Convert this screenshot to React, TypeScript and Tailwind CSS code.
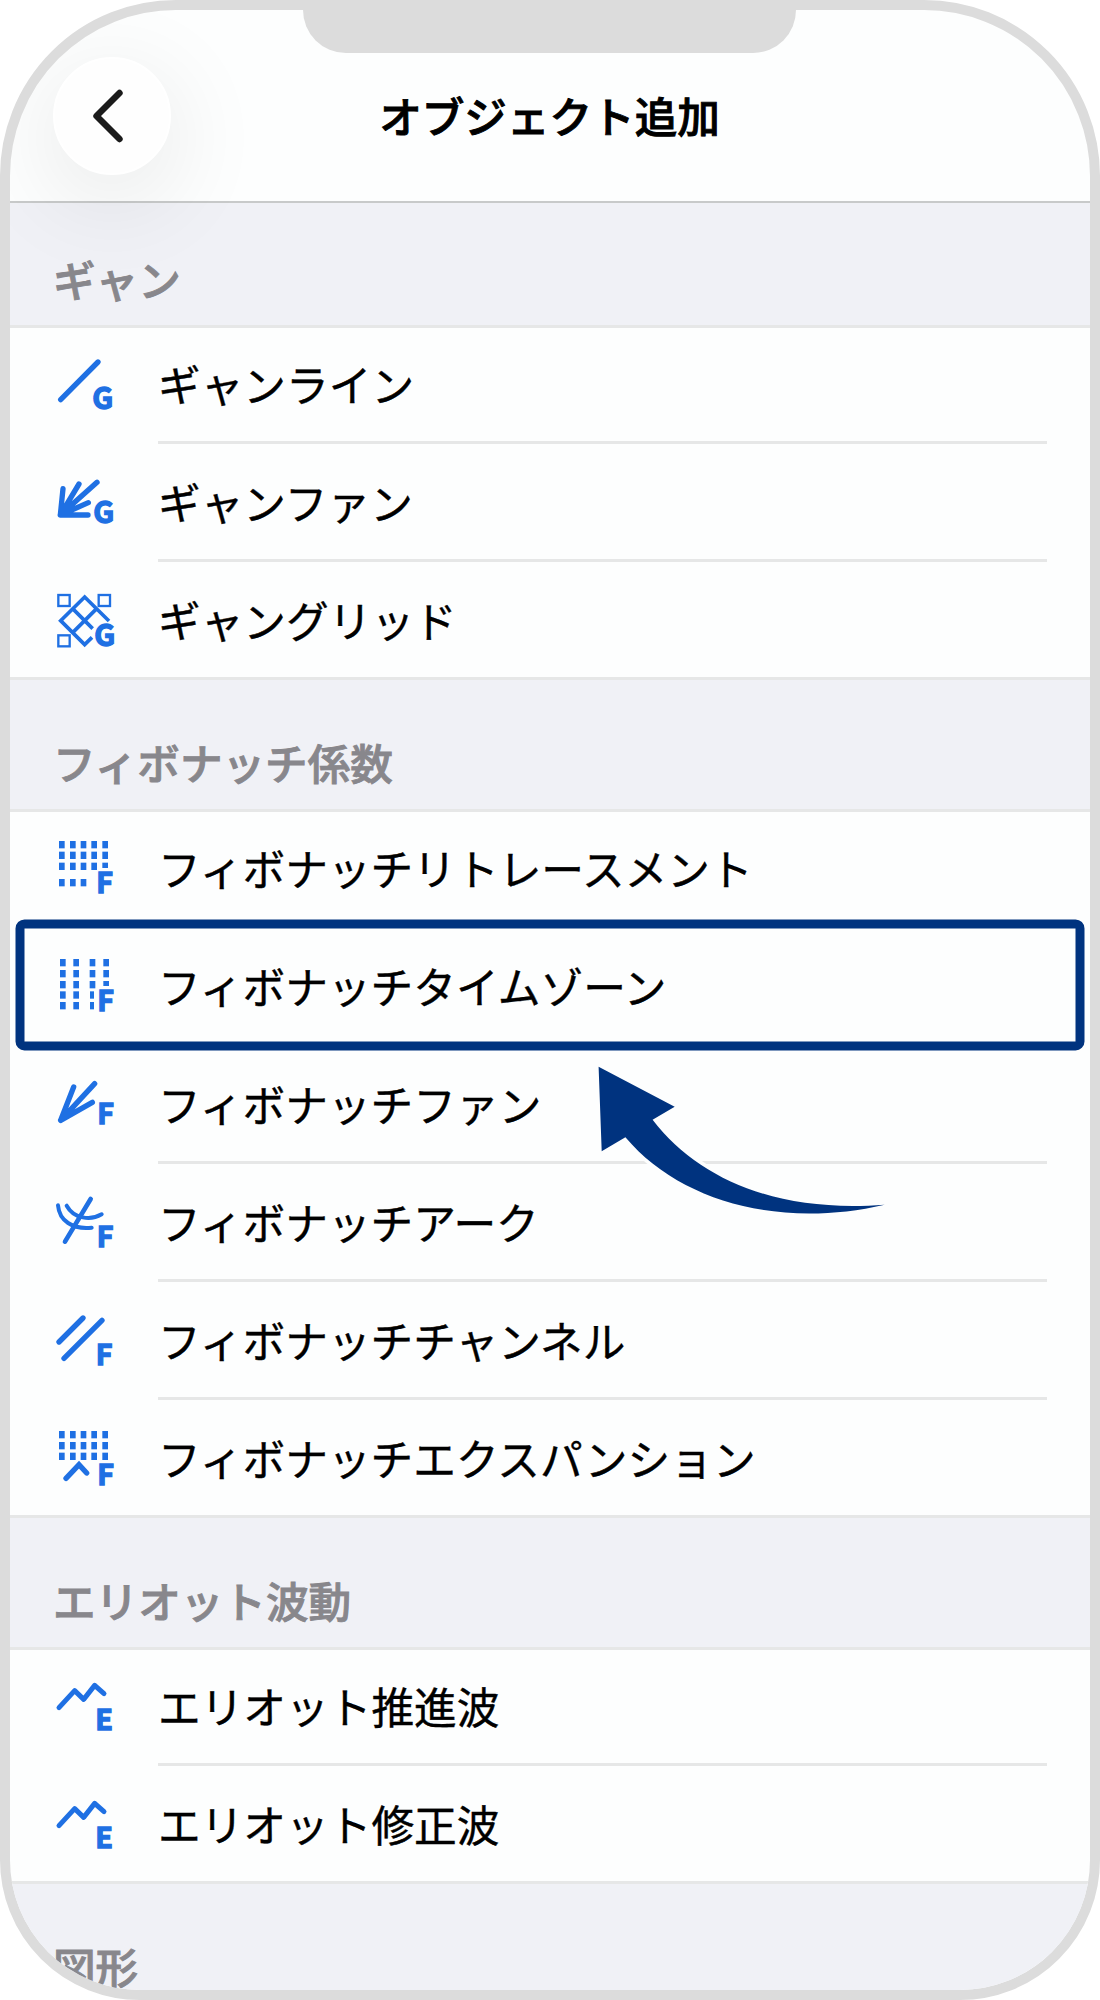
import type { ReactNode } from 'react';
import clsx from 'clsx';

type Item = {
    label: string;
    icon: ReactNode;
};

type Section = {
    title: string;
    items: Item[];
};

const Badge = ({ letter, x, y }: { letter: string; x: number; y: number }) => (
    <text
        x={x}
        y={y}
        fill="#1f70e3"
        stroke="#1f70e3"
        strokeWidth="4"
        className={clsx("font-['Noto_Sans_CJK_JP',sans-serif] font-bold", letter === 'G' ? 'text-[88px]' : 'text-[86px]')}
    >
        {letter}
    </text>
);

const Icon = ({ children }: { children: ReactNode }) => (
    <svg
        viewBox="0 0 192 300"
        className="w-16 h-[100px] shrink-0"
        fill="none"
        stroke="#1f70e3"
        strokeWidth="16"
        strokeLinecap="round"
    >
        {children}
    </svg>
);

// each dot is [x, y, width?, height?]
const Dots = ({ dots }: { dots: number[][] }) => (
    <g fill="#1f70e3" stroke="none">
        {dots.map(([x, y, w = 17, h = 22]) => (
            <rect key={`${x}-${y}`} x={x} y={y} width={w} height={h} />
        ))}
    </g>
);

const grid = (xs: number[], ys: number[]) => ys.flatMap((y) => xs.map((x) => [x, y]));

const ElliottIcon = () => (
    <Icon>
        <path d="M15 134L62 83L89 109L122 67L150 92" strokeWidth="15" strokeLinejoin="round" />
        <Badge letter="E" x={124} y={200} />
    </Icon>
);

const sections: Section[] = [
    {
        title: 'ギャン',
        items: [
            {
                label: 'ギャンライン',
                icon: (
                    <Icon>
                        <path d="M20 176L132 63" />
                        <Badge letter="G" x={115} y={203} />
                    </Icon>
                ),
            },
            {
                label: 'ギャンファン',
                icon: (
                    <Icon>
                        <path d="M19 168L27 89M19 168L75 75M19 168L129 70M19 168L103 131M19 168H102" />
                        <Badge letter="G" x={118} y={191} />
                    </Icon>
                ),
            },
            {
                label: 'ギャングリッド',
                icon: (
                    <Icon>
                        <g strokeWidth="7" strokeLinecap="butt">
                            <rect x="13" y="54" width="34" height="33" />
                            <rect x="134" y="54" width="34" height="33" />
                            <rect x="13" y="175" width="34" height="33" />
                        </g>
                        <path
                            d="M165 132L92 60L20 131L92 203L114 181M56 95L116 155M128 95L56 167"
                            strokeWidth="11"
                            strokeLinecap="butt"
                        />
                        <Badge letter="G" x={121} y={207} />
                    </Icon>
                ),
            },
        ],
    },
    {
        title: 'フィボナッチ係数',
        items: [
            {
                label: 'フィボナッチリトレースメント',
                icon: (
                    <Icon>
                        <Dots
                            dots={[
                                ...grid([15, 48, 80, 112, 145], [48, 80]),
                                ...grid([15, 48, 80, 112], [113]),
                                [145, 113, 17, 16],
                                ...grid([15, 48, 80], [162]),
                            ]}
                        />
                        <Badge letter="F" x={127} y={205} />
                    </Icon>
                ),
            },
            {
                label: 'フィボナッチタイムゾーン',
                icon: (
                    <Icon>
                        <Dots
                            dots={[
                                ...grid([18, 58], [48, 81, 114, 145, 177]),
                                ...grid([107], [48, 81, 114]),
                                [108, 145, 12],
                                [108, 177, 12],
                                ...grid([148], [48, 81]),
                                [148, 114, 17, 15],
                            ]}
                        />
                        <Badge letter="F" x={130} y={205} />
                    </Icon>
                ),
            },
            {
                label: 'フィボナッチファン',
                icon: (
                    <Icon>
                        <path d="M20 178L59 78M20 178L122 68M20 178L115 124" />
                        <Badge letter="F" x={130} y={190} />
                    </Icon>
                ),
            },
            {
                label: 'フィボナッチアーク',
                icon: (
                    <Icon>
                        <path d="M33 188L110 60" strokeWidth="14" />
                        <path d="M12 79C16 125 55 152 113 146M38 80C60 120 110 125 143 106" strokeWidth="12" />
                        <Badge letter="F" x={128} y={204} />
                    </Icon>
                ),
            },
            {
                label: 'フィボナッチチャンネル',
                icon: (
                    <Icon>
                        <path d="M15 135L87 63M30 184L144 70" />
                        <Badge letter="F" x={125} y={204} />
                    </Icon>
                ),
            },
            {
                label: 'フィボナッチエクスパンション',
                icon: (
                    <Icon>
                        <Dots dots={grid([15, 48, 80, 112, 145], [48, 81, 113])} />
                        <path d="M36 190L75 149L98 174" />
                        <Badge letter="F" x={130} y={210} />
                    </Icon>
                ),
            },
        ],
    },
    {
        title: 'エリオット波動',
        items: [
            { label: 'エリオット推進波', icon: <ElliottIcon /> },
            { label: 'エリオット修正波', icon: <ElliottIcon /> },
        ],
    },
];

const SectionTitle = ({ title, first }: { title: string; first?: boolean }) => (
    <h2
        className={clsx(
            'flex items-end bg-[#f0f1f6] pl-[43px] text-[42.6px] leading-[60px] font-medium text-[#88878c] [-webkit-text-stroke:0.9px_#88878c]',
            first ? 'h-[122px] pb-4' : 'h-[129px] pb-[17px]'
        )}
    >
        {title}
    </h2>
);

const Row = ({ item, first, last }: { item: Item; first: boolean; last: boolean }) => (
    <li
        className={clsx(
            'flex items-end pl-11',
            first && 'h-[116px]',
            last && 'h-[115px]',
            !first && !last && 'h-[118px]'
        )}
    >
        <div className={clsx(!last && 'pb-[3px]')}>{item.icon}</div>
        <div
            className={clsx(
                'ml-10 mr-[43px] flex-1 pb-7 text-[42.7px] leading-[60px] text-black whitespace-nowrap [-webkit-text-stroke:0.4px_black]',
                !last && 'border-b-[3px] border-[#e6e7e7]'
            )}
        >
            {item.label}
        </div>
    </li>
);

const App = () => {
    return (
        <div className="relative h-[2000px] w-[1100px] overflow-hidden rounded-t-[176px] rounded-b-[140px] border-[10px] border-[#dcdcdc] bg-[#fdfefe] font-['Noto_Sans_CJK_JP',sans-serif]">
            <div className="absolute top-0 left-[293px] h-[43px] w-[493px] rounded-b-[44px] bg-[#dcdcdc]" />

            <header className="flex h-[193px] items-center border-b-2 border-[#c8caca] pt-[21px] pl-[43px]">
                <button className="relative flex size-[118px] items-center justify-center rounded-full border-2 border-white bg-[#fefefe] shadow-[0_22px_95px_8px_rgba(0,0,0,0.08)]">
                    <svg viewBox="0 0 118 118" className="size-[118px] shrink-0" fill="none">
                        <path
                            d="M66.5 36L43.5 59L66.5 82"
                            stroke="#1b1b1b"
                            strokeWidth="6.4"
                            strokeLinecap="round"
                            strokeLinejoin="round"
                        />
                    </svg>
                </button>
                <h1 className="relative -top-px flex-1 pr-[162px] text-center text-[42.6px] leading-[60px] font-medium text-black [-webkit-text-stroke:0.9px_black]">
                    オブジェクト追加
                </h1>
            </header>

            <main>
                {sections.map((section, index) => (
                    <section key={section.title}>
                        <SectionTitle title={section.title} first={index === 0} />
                        <ul className="border-y-[3px] border-[#e6e7e7]">
                            {section.items.map((item, i) => (
                                <Row
                                    key={item.label}
                                    item={item}
                                    first={i === 0}
                                    last={i === section.items.length - 1}
                                />
                            ))}
                        </ul>
                    </section>
                ))}
                <SectionTitle title="図形" />
            </main>

            {/* callout around the selected row */}
            <div className="absolute top-[909px] left-[5px] h-[131px] w-[1069px] translate-x-[0.5px] translate-y-[0.4px] rounded-[9px] border-[9px] border-[#00337f]" />
            <svg viewBox="590 1060 300 165" className="absolute top-[1050px] left-[580px] h-[165px] w-[300px]">
                <path
                    d="M598.6 1066.7L674.7 1106.7L652.6 1119.7C700 1181 780 1213 884.7 1204.7C780 1229 680 1202 625.4 1137.3L601.7 1151.3Z"
                    fill="#00337f"
                    stroke="#fdfefe"
                    strokeWidth="7"
                    className="[paint-order:stroke]"
                />
            </svg>
        </div>
    );
};

export default App;
